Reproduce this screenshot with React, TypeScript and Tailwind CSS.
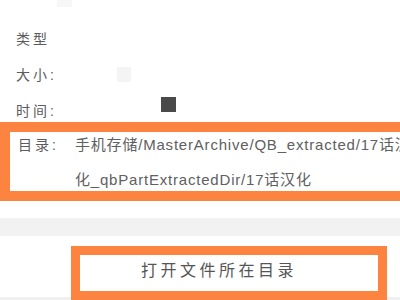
const cjk = "font-['Liberation_Sans','Noto_Sans_CJK_SC',sans-serif]";

function InfoRow({
  label,
  className,
  children,
}: {
  label: string;
  className: string;
  children?: React.ReactNode;
}) {
  return (
    <div className={`flex items-start pl-4 ${className}`}>
      <span className="w-[101px] text-[14px] leading-[16px] tracking-[3px] text-[#5c5c5c]">{label}</span>
      {children}
    </div>
  );
}

export default function App() {
  return (
    <div className={`w-[400px] h-[300px] overflow-hidden bg-white ${cjk}`}>
      {/* faint leftover from the header */}
      <div className="h-[31px]">
        <div className="ml-[57px] w-[15px] h-[7px] bg-[#f7f7f7]" />
      </div>

      <InfoRow label="类型" className="h-[36px]" />
      <InfoRow label="大小:" className="h-[36px]">
        <div className="w-[14px] h-[15px] bg-[#f4f4f4]" />
      </InfoRow>
      <InfoRow label="时间:" className="h-[19px]">
        <div className="ml-[44px] -mt-[6px] w-[15px] h-[15px] bg-[#4a4a4a]" />
      </InfoRow>

      {/* directory, highlighted */}
      <div className="w-[440px] h-[79px] border-[10px] border-[#fd8341] flex pl-[8px]">
        <span className="w-[57px] text-[14px] leading-[26px] tracking-[3px] text-[#5c5c5c]">目录:</span>
        <div className="text-[15px] tracking-[0.8px] text-[#606060] whitespace-nowrap">
          <div className="h-[26px] leading-[26px]">手机存储/MasterArchive/QB_extracted/17话汉</div>
          <div className="mt-[9px] h-[26px] leading-[26px]">化_qbPartExtractedDir/17话汉化</div>
        </div>
      </div>

      <div className="h-[17px]" />
      <div className="h-[18px] bg-[#f2f2f2]" />
      <div className="h-[10px]" />

      {/* open folder button, highlighted */}
      <div className="flex items-end h-[54px]">
        <div className="w-[71px] h-[3px] bg-[#f0f0f0]" />
        <div className="w-[316px] h-[54px] border-[9px] border-[#fd8341] flex items-center justify-center pr-[20px] pb-[4px]">
          <span className="text-[16px] tracking-[3.5px] text-[#555]">打开文件所在目录</span>
        </div>
        <div className="flex-1 h-[3px] bg-[#f0f0f0]" />
      </div>
    </div>
  );
}
